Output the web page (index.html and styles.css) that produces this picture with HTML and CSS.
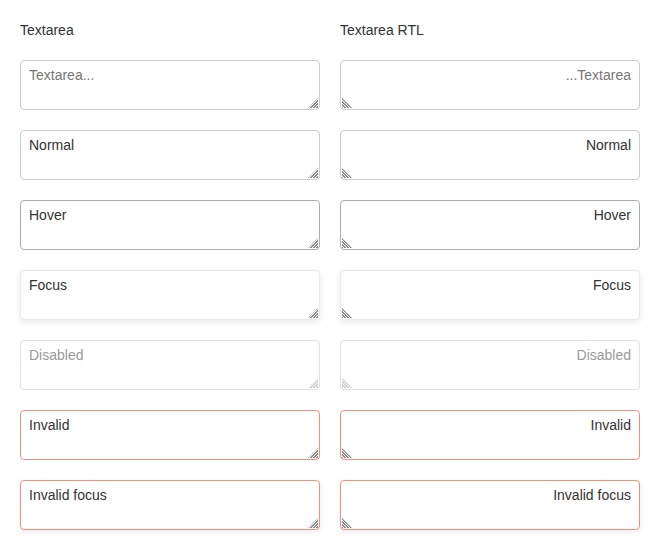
FILE: index.html
```html
<!DOCTYPE html>
<html>
<head>
<meta charset="utf-8">
<link rel="stylesheet" href="styles.css">
</head>
<body>
<div class="grid">
  <div class="col">
    <div class="label">Textarea</div>
    <div class="field"><textarea class="ta" placeholder="Textarea..."></textarea><span class="grip"></span></div>
    <div class="field"><textarea class="ta">Normal</textarea><span class="grip"></span></div>
    <div class="field"><textarea class="ta hover">Hover</textarea><span class="grip"></span></div>
    <div class="field"><textarea class="ta focus">Focus</textarea><span class="grip"></span></div>
    <div class="field"><textarea class="ta" disabled placeholder="Disabled"></textarea><span class="grip light"></span></div>
    <div class="field"><textarea class="ta invalid">Invalid</textarea><span class="grip"></span></div>
    <div class="field"><textarea class="ta invalid focus">Invalid focus</textarea><span class="grip"></span></div>
  </div>
  <div class="col rtl" dir="rtl">
    <div class="label" dir="ltr">Textarea RTL</div>
    <div class="field"><textarea class="ta" placeholder="Textarea..."></textarea><span class="grip"></span></div>
    <div class="field"><textarea class="ta">Normal</textarea><span class="grip"></span></div>
    <div class="field"><textarea class="ta hover">Hover</textarea><span class="grip"></span></div>
    <div class="field"><textarea class="ta focus">Focus</textarea><span class="grip"></span></div>
    <div class="field"><textarea class="ta" disabled placeholder="Disabled"></textarea><span class="grip light"></span></div>
    <div class="field"><textarea class="ta invalid">Invalid</textarea><span class="grip"></span></div>
    <div class="field"><textarea class="ta invalid focus">Invalid focus</textarea><span class="grip"></span></div>
  </div>
</div>
</body>
</html>
```
FILE: styles.css
```css
html, body {
  margin: 0;
  padding: 0;
  background: #fff;
}
body {
  font-family: "Liberation Sans", Arial, sans-serif;
  font-size: 14px;
  color: #333;
}
.grid {
  display: grid;
  grid-template-columns: 300px 300px;
  column-gap: 20px;
  padding: 20px;
}
.col {
  display: flex;
  flex-direction: column;
  gap: 20px;
}
.label {
  line-height: 20px;
  height: 20px;
  text-align: left;
}
.field {
  position: relative;
  width: 300px;
  height: 50px;
}
.ta {
  display: block;
  box-sizing: border-box;
  width: 300px;
  height: 50px;
  margin: 0;
  padding: 4px 8px;
  font-family: "Liberation Sans", Arial, sans-serif;
  font-size: 14px;
  line-height: 20px;
  color: #333;
  background: #fff;
  border: 1px solid #cccccc;
  border-radius: 4px;
  outline: none;
  resize: none;
}
.grip {
  position: absolute;
  right: 2px;
  bottom: 2px;
  width: 10px;
  height: 10px;
  pointer-events: none;
  background: repeating-linear-gradient(135deg, #8a8a8a 0 0.9px, #ffffff 0.9px 2.1px);
  clip-path: polygon(100% 0, 100% 100%, 0 100%);
}
.rtl .grip {
  right: auto;
  left: 2px;
  background: repeating-linear-gradient(45deg, #8a8a8a 0 0.9px, #ffffff 0.9px 2.1px);
  clip-path: polygon(0 0, 100% 100%, 0 100%);
}
.grip.light {
  background: repeating-linear-gradient(135deg, #cccccc 0 0.9px, #ffffff 0.9px 2.1px);
}
.rtl .grip.light {
  background: repeating-linear-gradient(45deg, #cccccc 0 0.9px, #ffffff 0.9px 2.1px);
}
.ta::placeholder {
  color: #777;
  opacity: 1;
}
.ta.hover {
  border-color: #acacac;
}
.ta.focus {
  border-color: #e8e8e8;
  box-shadow: 0 2px 6px rgba(0, 0, 0, 0.09);
}
.ta:disabled {
  border-color: #e2e2e2;
  color: #999;
}
.ta:disabled::placeholder {
  color: #9a9a9a;
}
.ta.invalid {
  border-color: #f0917d;
}
.ta.invalid.focus {
  border-color: #f0917d;
  box-shadow: 0 2px 6px rgba(0, 0, 0, 0.08);
}
```
